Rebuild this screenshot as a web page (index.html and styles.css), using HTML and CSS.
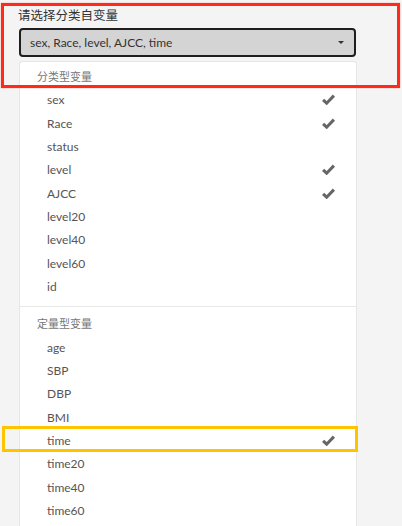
FILE: index.html
```html
<!DOCTYPE html>
<html>
<head>
<meta charset="utf-8">
<link rel="stylesheet" href="styles.css">
</head>
<body>
<div class="page">
  <div class="annot-red"></div>
  <label class="title">请选择分类自变量</label>
  <div class="select">
    <span class="select-text">sex, Race, level, AJCC, time</span>
    <span class="caret"></span>
  </div>
  <ul class="menu">
    <li class="header">分类型变量</li>
    <li class="item selected"><span>sex</span><svg class="check" viewBox="0 0 12 10"><path d="M1 5.4 L4.3 8.4 L11 1.4" /></svg></li>
    <li class="item selected"><span>Race</span><svg class="check" viewBox="0 0 12 10"><path d="M1 5.4 L4.3 8.4 L11 1.4" /></svg></li>
    <li class="item"><span>status</span></li>
    <li class="item selected"><span>level</span><svg class="check" viewBox="0 0 12 10"><path d="M1 5.4 L4.3 8.4 L11 1.4" /></svg></li>
    <li class="item selected"><span>AJCC</span><svg class="check" viewBox="0 0 12 10"><path d="M1 5.4 L4.3 8.4 L11 1.4" /></svg></li>
    <li class="item"><span>level20</span></li>
    <li class="item"><span>level40</span></li>
    <li class="item"><span>level60</span></li>
    <li class="item"><span>id</span></li>
    <li class="divider"></li>
    <li class="header">定量型变量</li>
    <li class="item"><span>age</span></li>
    <li class="item"><span>SBP</span></li>
    <li class="item"><span>DBP</span></li>
    <li class="item"><span>BMI</span></li>
    <li class="item selected highlight"><span>time</span><svg class="check" viewBox="0 0 12 10"><path d="M1 5.4 L4.3 8.4 L11 1.4" /></svg></li>
    <li class="item"><span>time20</span></li>
    <li class="item"><span>time40</span></li>
    <li class="item"><span>time60</span></li>
  </ul>
</div>
</body>
</html>
```
FILE: styles.css
```css
html, body {
  margin: 0;
  padding: 0;
  background: #f4f4f4;
  overflow: hidden;
  height: 526px;
}
.page {
  position: relative;
  padding-top: 6px;
  font-family: Lato, "Noto Sans CJK SC", sans-serif;
}
.annot-red {
  position: absolute;
  left: 1px;
  top: 3px;
  width: 393px;
  height: 79px;
  border: 3px solid #ff2a1a;
  box-shadow: 0 0 1px rgba(255, 40, 20, 0.6);
  pointer-events: none;
  z-index: 5;
}
.title {
  display: block;
  margin-left: 18px;
  font-family: "Noto Sans CJK SC", sans-serif;
  font-size: 12.5px;
  line-height: 18px;
  color: #333;
}
.select {
  margin: 4px 0 0 19px;
  width: 337px;
  height: 29px;
  box-sizing: border-box;
  border: 2px solid #1e1e1e;
  border-radius: 4px;
  background: #d4d4d4;
  display: flex;
  align-items: center;
  justify-content: space-between;
  padding: 0 9px 0 9px;
}
.select-text {
  font-size: 12px;
  color: #333;
}
.caret {
  width: 0;
  height: 0;
  border-left: 3px solid transparent;
  border-right: 3px solid transparent;
  border-top: 3px solid #333;
  margin-right: 1px;
}
.menu {
  list-style: none;
  margin: 4px 0 0 19px;
  padding: 3px 0 0 0;
  width: 338px;
  box-sizing: border-box;
  background: #fff;
  border: 1px solid #e6e6e6;
  border-bottom: none;
  border-radius: 3px 3px 0 0;
  height: 470px;
}
.header {
  height: 23.33px;
  line-height: 23.33px;
  padding-left: 17px;
  font-family: "Noto Sans CJK SC", sans-serif;
  font-size: 11px;
  color: #777;
}
.item {
  position: relative;
  height: 23.33px;
  display: flex;
  align-items: center;
  justify-content: space-between;
  padding: 0 21px 0 27px;
  font-size: 12px;
  color: #555;
}
.check {
  width: 13px;
  height: 11px;
  fill: none;
  stroke: #666;
  stroke-width: 2.8;
}
.divider {
  height: 1px;
  background: #e8e8e8;
  margin: 8px 0 5px 0;
}
.highlight::after {
  content: "";
  position: absolute;
  left: -18px;
  top: -3px;
  width: 350px;
  height: 20px;
  border: 3px solid #ffc400;
  pointer-events: none;
}
```
